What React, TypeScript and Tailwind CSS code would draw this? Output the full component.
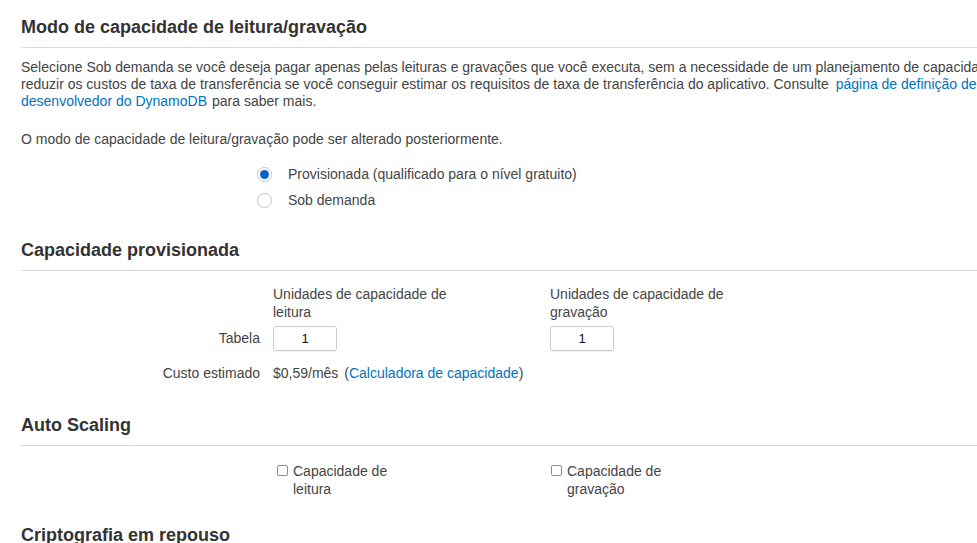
import React, { useState } from 'react';

function SectionHeading({ children, className = '' }: { children: React.ReactNode; className?: string }) {
  return (
    <div className={`border-b border-[#d5dbdb] pb-[10px] ${className}`}>
      <h2 className="text-[18px] leading-[20px] font-bold text-[#333]">{children}</h2>
    </div>
  );
}

function Radio({ checked, label, onSelect }: { checked: boolean; label: string; onSelect: () => void }) {
  return (
    <label className="flex h-[26px] items-center cursor-pointer" onClick={onSelect}>
      <span className="flex h-[15px] w-[15px] items-center justify-center rounded-full border border-[#c4c4c4] bg-white">
        {checked && <span className="h-[9px] w-[9px] rounded-full bg-[#0b5fc6]" />}
      </span>
      <span className="ml-[16px]">{label}</span>
    </label>
  );
}

function Check({ label, className = '' }: { label: React.ReactNode; className?: string }) {
  const [on, setOn] = useState(false);
  return (
    <label className={`flex items-start cursor-pointer ${className}`} onClick={() => setOn(!on)}>
      <span className="mt-[3px] flex h-[11px] w-[11px] shrink-0 items-center justify-center rounded-[2px] border border-[#8c8c8c] bg-white">
        {on && <span className="h-[5px] w-[5px] bg-[#0b5fc6]" />}
      </span>
      <span className="ml-[5px] whitespace-nowrap leading-[18px]">{label}</span>
    </label>
  );
}

export default function App() {
  const [mode, setMode] = useState<'prov' | 'demand'>('prov');

  return (
    <div className="h-[543px] w-[977px] overflow-hidden bg-white">
      <div className="w-[1200px] pl-[21px] text-[14px] leading-[17px] text-[#444]" style={{ fontFamily: '"Liberation Sans", Arial, sans-serif' }}>
        {/* Modo de capacidade */}
        <SectionHeading className="pt-[17px]">Modo de capacidade de leitura/gravação</SectionHeading>

        <p className="mt-[11px] whitespace-nowrap">
          Selecione Sob demanda se você deseja pagar apenas pelas leituras e gravações que você executa, sem a necessidade de um planejamento de capacidade. Selecione Provisionada para
          <br />
          reduzir os custos de taxa de transferência se você conseguir estimar os requisitos de taxa de transferência do aplicativo. Consulte{' '}
          <a href="#" className="ml-[3px] text-[#0073bb]">página de definição de preço do guia do</a>
          <br />
          <a href="#" className="text-[#0073bb]">desenvolvedor do DynamoDB</a>
          <span className="ml-[5px]">para saber mais.</span>
        </p>

        <p className="mt-[21px]">O modo de capacidade de leitura/gravação pode ser alterado posteriormente.</p>

        <div className="mt-[13px] pl-[236px]">
          <Radio checked={mode === 'prov'} label="Provisionada (qualificado para o nível gratuito)" onSelect={() => setMode('prov')} />
          <Radio checked={mode === 'demand'} label="Sob demanda" onSelect={() => setMode('demand')} />
        </div>

        {/* Capacidade provisionada */}
        <SectionHeading className="mt-[27px]">Capacidade provisionada</SectionHeading>

        <div className="mt-[14px] grid grid-cols-[252px_277px_277px] items-center">
          <div />
          <div className="w-[200px] leading-[18px]">Unidades de capacidade de leitura</div>
          <div className="w-[200px] leading-[18px]">Unidades de capacidade de gravação</div>

          <div className="mt-[5px] pr-[13px] text-right">Tabela</div>
          <div className="mt-[5px]">
            <input
              defaultValue="1"
              className="h-[25px] w-[64px] rounded-[3px] border border-[#c9cdd0] bg-white text-center text-[13px] text-[#111] shadow-[0_1px_1px_rgba(0,0,0,0.06)] outline-none"
            />
          </div>
          <div className="mt-[5px]">
            <input
              defaultValue="1"
              className="h-[25px] w-[64px] rounded-[3px] border border-[#c9cdd0] bg-white text-center text-[13px] text-[#111] shadow-[0_1px_1px_rgba(0,0,0,0.06)] outline-none"
            />
          </div>

          <div className="mt-[14px] pr-[13px] text-right">Custo estimado</div>
          <div className="col-span-2 mt-[14px] whitespace-nowrap">
            $0,59/mês <span className="ml-[2px]">(</span>
            <a href="#" className="text-[#0073bb]">Calculadora de capacidade</a>)
          </div>
        </div>

        {/* Auto Scaling */}
        <SectionHeading className="mt-[33px]">Auto Scaling</SectionHeading>

        <div className="mt-[16px] grid grid-cols-[252px_277px_277px]">
          <div />
          <Check className="ml-[4px]" label={<>Capacidade de<br />leitura</>} />
          <Check className="ml-[1px]" label={<>Capacidade de<br />gravação</>} />
        </div>

        <SectionHeading className="mt-[27px]">Criptografia em repouso</SectionHeading>
      </div>
    </div>
  );
}
